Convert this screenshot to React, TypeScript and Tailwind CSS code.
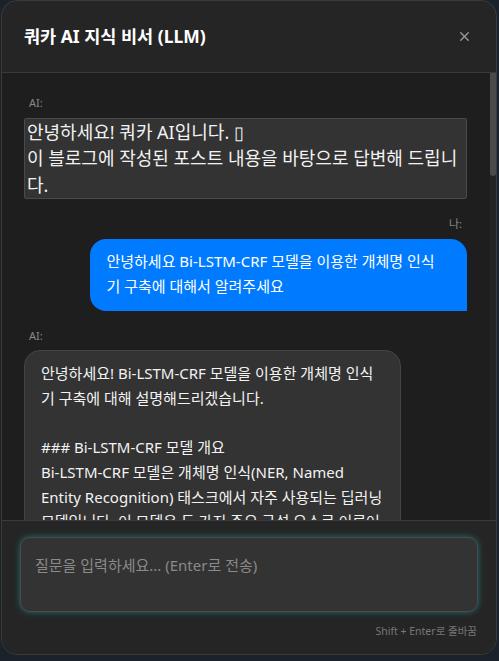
import { X } from "lucide-react";

const font = { fontFamily: '"Noto Sans", "Noto Sans CJK KR", sans-serif' };

const answer = `안녕하세요! Bi-LSTM-CRF 모델을 이용한 개체명 인식기 구축에 대해 설명해드리겠습니다.

### Bi-LSTM-CRF 모델 개요
Bi-LSTM-CRF 모델은 개체명 인식(NER, Named Entity Recognition) 태스크에서 자주 사용되는 딥러닝 모델입니다. 이 모델은 두 가지 주요 구성 요소로 이루어져 있습니다.

1. **Bi-LSTM**: 문장의 앞뒤 문맥을 모두 반영한 특징 벡터를 만듭니다.
2. **CRF**: 태그 간의 전이 확률을 학습하여 가장 그럴듯한 태그 시퀀스를 찾습니다.`;

export default function App() {
  return (
    <div className="w-[499px] h-[661px] bg-[#1a232b] overflow-hidden" style={font}>
      <div className="ml-px w-[496px] h-[655px] flex flex-col rounded-2xl border border-[#3a3a3a] bg-[#252525] overflow-hidden">
        {/* header */}
        <div className="h-[72px] shrink-0 flex items-center justify-between pl-[22px] pr-[24px] border-b border-[#3a3a3a]">
          <h2 className="text-[17.5px] font-bold text-white">쿼카 AI 지식 비서 (LLM)</h2>
          <X className="w-[15px] h-[15px] text-[#9a9a9a]" strokeWidth={2.2} />
        </div>

        {/* messages + scrollbar */}
        <div className="flex-1 min-h-0 flex bg-[#1e1e1e]">
          <div className="flex-1 min-w-0 overflow-hidden pl-[22px] pr-[23px] pt-[22px]">
            <div className="flex flex-col">
              <div className="text-[11px] text-[#8a8a8a] pl-[5px] mb-[6px]">AI:</div>
              <div className="bg-[#333333] border border-[#4a4a4a] rounded-[2px] px-[2px] text-[18px] leading-[26.5px] text-[#f2f2f2]">
                안녕하세요! 쿼카 AI입니다. ▯
                <br />
                이 블로그에 작성된 포스트 내용을 바탕으로 답변해 드립니다.
              </div>
            </div>

            <div className="flex flex-col items-end mt-[17px]">
              <div className="text-[11px] text-[#8a8a8a] pr-[5px] mb-[6px]">나:</div>
              <div className="max-w-[85%] bg-[#007bff] text-white rounded-2xl rounded-br-none pl-4 pr-[20px] pt-[10px] pb-[12px] text-[15px] leading-[25px]">
                안녕하세요 Bi-LSTM-CRF 모델을 이용한 개체명 인식기 구축에 대해서 알려주세요
              </div>
            </div>

            <div className="flex flex-col items-start mt-[17px] pb-5">
              <div className="text-[11px] text-[#8a8a8a] pl-[5px] mb-[6px]">AI:</div>
              <div className="max-w-[85%] bg-[#333333] border border-[#444444] text-[#f2f2f2] rounded-2xl rounded-bl-none px-4 pt-[10px] pb-[12px] text-[15px] leading-[24.7px] whitespace-pre-wrap">
                {answer}
              </div>
            </div>
          </div>
          <div className="w-[6px] shrink-0 bg-[#232323]">
            <div className="h-[103px] bg-[#4a4a4a] rounded-b-[3px]" />
          </div>
        </div>

        {/* input */}
        <div className="shrink-0 border-t border-[#3a3a3a] bg-[#252525] px-[18px] pt-[16px] pb-[14px]">
          <textarea
            className="block w-full h-[75px] resize-none rounded-[10px] bg-[#333333] border border-[#4a4a4a] shadow-[0_0_6px_rgba(32,201,201,0.45)] px-[14px] py-[16px] text-[15px] text-white placeholder:text-[#8a8a8a] outline-none"
            style={font}
            placeholder="질문을 입력하세요... (Enter로 전송)"
          />
          <div className="mt-[12px] text-right text-[10.5px] text-[#777777] pr-px">Shift + Enter로 줄바꿈</div>
        </div>
      </div>
    </div>
  );
}
